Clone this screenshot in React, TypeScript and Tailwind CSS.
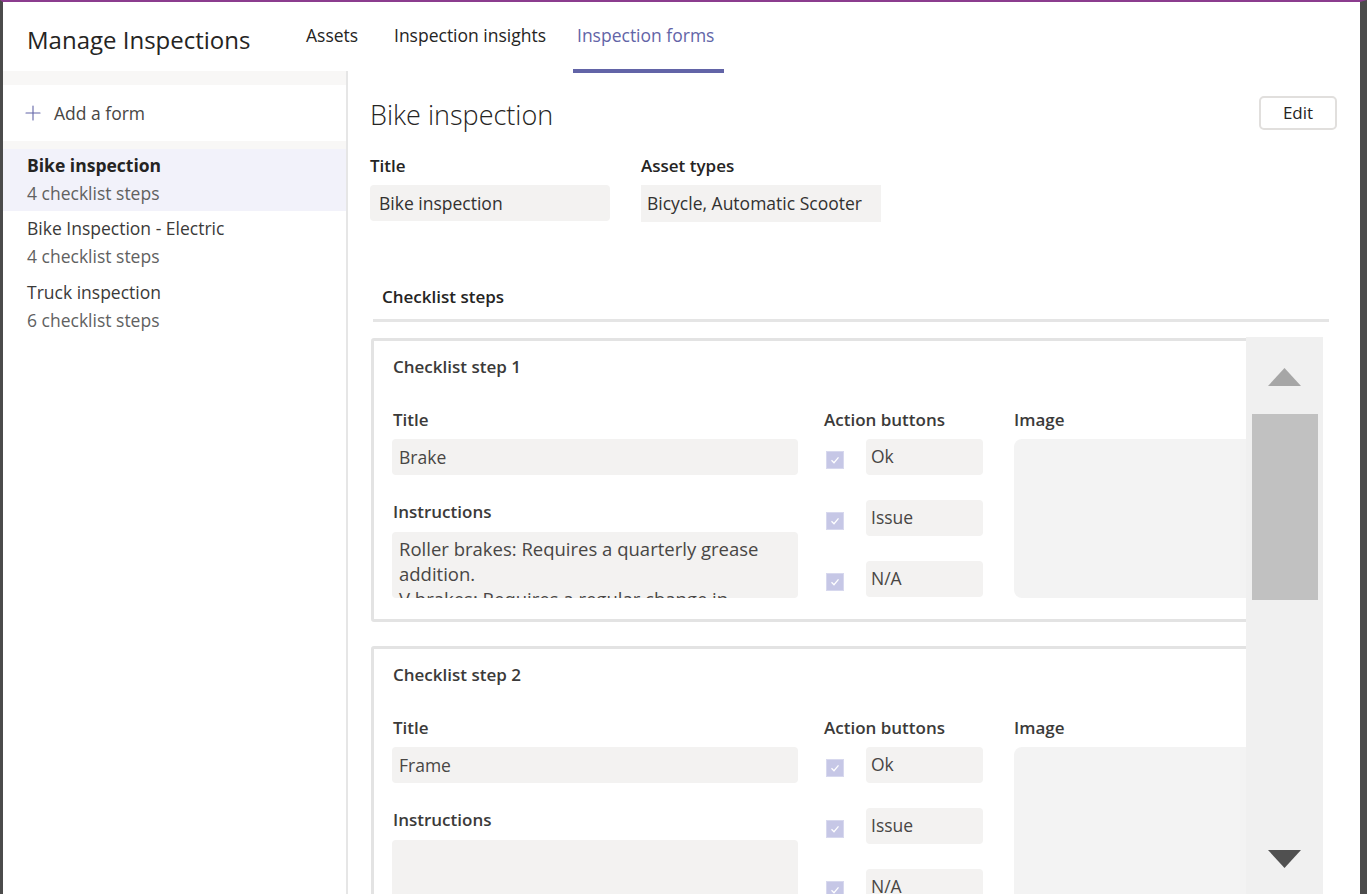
import { Plus } from 'lucide-react';

const FONT = { fontFamily: '"Open Sans", "Noto Sans", sans-serif' };

const forms = [
  { name: 'Bike inspection', steps: 4, active: true },
  { name: 'Bike Inspection - Electric', steps: 4, active: false },
  { name: 'Truck inspection', steps: 6, active: false },
];

function CheckBox() {
  return (
    <div className="w-[18px] h-[18px] shrink-0 bg-[#c6c7e6] border border-[#d7d8ee] flex items-center justify-center">
      <svg width="12" height="12" viewBox="0 0 12 12">
        <path d="M2.5 6.3 L5 8.7 L9.5 3.3" fill="none" stroke="white" strokeWidth="1.3" />
      </svg>
    </div>
  );
}

function ActionRow({ label }: { label: string }) {
  return (
    <div className="flex items-center h-[36px]">
      <div className="w-[42px] pl-[2px] pt-[5px]">
        <CheckBox />
      </div>
      <div className="w-[117px] h-[36px] bg-[#f3f2f1] rounded-[4px] px-[5px] text-[17.5px] leading-[34px] text-[#484644]">
        {label}
      </div>
    </div>
  );
}

function StepCard({ index, title, instructions, tall }: { index: number; title: string; instructions: string[]; tall?: boolean }) {
  return (
    <div className="w-[960px] shrink-0 border-[3px] border-[#e3e3e3] rounded-[3px] bg-white pl-[18px] pt-[14px] pb-[21px]">
      <div className="pl-px text-[17px] leading-[24px] font-semibold text-[#3b3a39]">Checklist step {index}</div>
      <div className="flex mt-[29px]">
        <div className="w-[406px] shrink-0">
          <div className="pl-px text-[17px] leading-[24px] font-semibold text-[#3b3a39]">Title</div>
          <div className="mt-[7px] h-[36px] bg-[#f3f2f1] rounded-[4px] px-[7px] text-[17.5px] leading-[36px] text-[#484644]">
            {title}
          </div>
          <div className="mt-[25px] pl-px text-[17px] leading-[24px] font-semibold text-[#3b3a39]">Instructions</div>
          <div
            className={
              tall
                ? 'mt-[8px] h-[120px] bg-[#f3f2f1] rounded-[4px]'
                : 'mt-[8px] h-[66px] bg-[#f3f2f1] rounded-[4px] px-[7px] pt-[4px] overflow-hidden text-[18.5px] leading-[25px] text-[#484644]'
            }
          >
            {instructions.map((line) => (
              <div key={line} className="whitespace-nowrap">{line}</div>
            ))}
          </div>
        </div>
        <div className="ml-[26px] w-[190px] shrink-0">
          <div className="text-[17px] leading-[24px] font-semibold text-[#3b3a39]">Action buttons</div>
          <div className="mt-[7px] flex flex-col gap-[25px]">
            <ActionRow label="Ok" />
            <ActionRow label="Issue" />
            <ActionRow label="N/A" />
          </div>
        </div>
        <div className="w-[280px] shrink-0">
          <div className="text-[17px] leading-[24px] font-semibold text-[#3b3a39]">Image</div>
          <div className={tall ? 'mt-[7px] h-[200px] bg-[#f3f3f3] rounded-[8px]' : 'mt-[7px] h-[159px] bg-[#f3f3f3] rounded-[8px]'} />
        </div>
      </div>
    </div>
  );
}

export default function App() {
  return (
    <div
      style={FONT}
      className="h-[894px] w-full overflow-hidden bg-white border-t-2 border-t-[#8b3c8e] border-l-[3px] border-l-[#4b4b4b] border-r-[7px] border-r-[#4b4b4b] flex flex-col text-[#252423]"
    >
      {/* Header */}
      <div className="flex h-[69px] shrink-0 pl-6">
        <div className="w-[275px] pt-[22px] text-[24px] leading-[32px] text-[#252423]">Manage Inspections</div>
        <div className="flex h-full">
          <div className="w-[88px] pl-1 pt-[20px] text-[17.5px] leading-[26px] text-[#252423]">Assets</div>
          <div className="w-[183px] pl-1 pt-[20px] text-[17.5px] leading-[26px] text-[#252423]">Inspection insights</div>
          <div className="w-[151px] flex flex-col justify-between">
            <div className="pl-1 pt-[20px] text-[17.5px] leading-[26px] font-medium text-[#6264a7] whitespace-nowrap">Inspection forms</div>
            <div className="h-[4px] bg-[#6264a7] -mb-[2px]" />
          </div>
        </div>
      </div>

      <div className="flex flex-1 min-h-0">
        {/* Left panel */}
        <div className="w-[343px] shrink-0 bg-white">
          <div className="h-[14px] bg-[#f8f7f6]" />
          <div className="h-[56px] flex items-center pl-[18px] gap-[9px] text-[17.5px] text-[#484644]">
            <Plus size={24} strokeWidth={1.1} className="text-[#6264a7]" />
            <span>Add a form</span>
          </div>
          <div className="h-[8px] bg-[#f8f7f6]" />
          {forms.map((f) => (
            <div key={f.name} className={f.active ? 'pl-6 pt-[2px] pb-[4px] bg-[#f2f2fa]' : 'pl-6 pt-[3px] pb-[5px]'}>
              <div className={f.active ? 'text-[17.5px] leading-[28px] font-bold text-[#252423]' : 'text-[17.5px] leading-[28px] text-[#3b3a39]'}>
                {f.name}
              </div>
              <div className="text-[17.5px] leading-[28px] text-[#616161]">{f.steps} checklist steps</div>
            </div>
          ))}
        </div>
        <div className="w-[2px] shrink-0 bg-[#e6e6e6]" />

        {/* Main */}
        <div className="flex-1 min-w-0 flex flex-col pl-[22px] pr-[23px] pt-[25px]">
          <div className="flex items-center justify-between h-[34px]">
            <div className="text-[27px] font-light leading-[36px] text-[#252423] mt-[3px]">Bike inspection</div>
            <button className="w-[78px] h-[34px] border-2 border-[#e1dfdd] rounded-[5px] text-[17px] text-[#252423] bg-white">
              Edit
            </button>
          </div>

          <div className="flex mt-[24px]">
            <div className="w-[271px] shrink-0">
              <div className="text-[17px] leading-[24px] font-semibold text-[#252423]">Title</div>
              <div className="mt-[7px] w-[240px] h-[36px] bg-[#f3f2f1] rounded-[4px] px-[9px] text-[17.5px] leading-[36px] text-[#323130]">
                Bike inspection
              </div>
            </div>
            <div>
              <div className="text-[17px] leading-[24px] font-semibold text-[#252423]">Asset types</div>
              <div className="mt-[7px] w-[240px] h-[37px] bg-[#f3f2f1] px-[6px] text-[17.5px] leading-[37px] text-[#323130] whitespace-nowrap">
                Bicycle, Automatic Scooter
              </div>
            </div>
          </div>

          <div className="mt-[63px] ml-[3px] mr-[8px] pl-[9px] pb-[10px] border-b-[3px] border-[#e5e5e5] text-[17px] leading-[24px] font-semibold text-[#252423]">
            Checklist steps
          </div>

          <div className="flex flex-1 min-h-0 mt-[15px] ml-px mr-[14px]">
            <div className="flex-1 min-w-0 overflow-hidden flex flex-col gap-[24px] pt-px">
              <StepCard
                index={1}
                title="Brake"
                instructions={[
                  'Roller brakes: Requires a quarterly grease',
                  'addition.',
                  'V brakes: Requires a regular change in',
                ]}
              />
              <StepCard index={2} title="Frame" instructions={[]} tall />
            </div>
            {/* Scrollbar */}
            <div className="w-[77px] shrink-0 bg-[#f0f0f0] flex flex-col items-center pt-[31px] pb-[26px]">
              <svg width="33" height="18" viewBox="0 0 33 18">
                <path d="M16.5 0 L33 18 L0 18 Z" fill="#a6a6a6" />
              </svg>
              <div className="mt-[28px] w-[66px] h-[186px] bg-[#c1c1c1] ml-px" />
              <div className="flex-1" />
              <svg width="33" height="18" viewBox="0 0 33 18">
                <path d="M0 0 L33 0 L16.5 18 Z" fill="#505050" />
              </svg>
            </div>
          </div>
        </div>
      </div>
    </div>
  );
}
